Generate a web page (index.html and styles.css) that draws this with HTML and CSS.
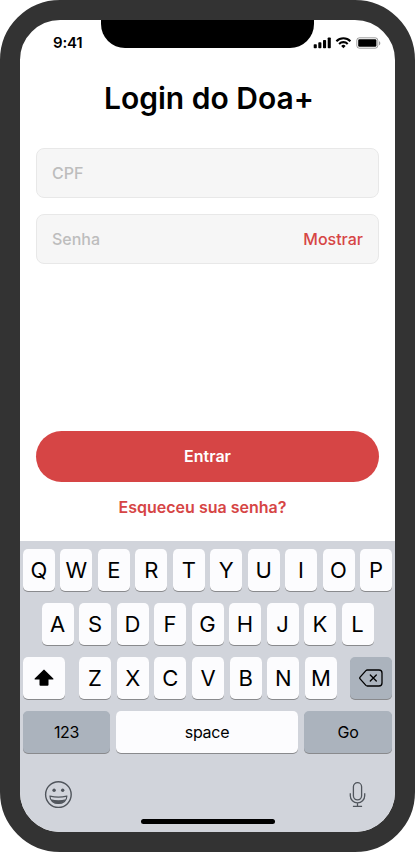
FILE: index.html
```html
<!DOCTYPE html>
<html lang="pt-BR">
<head>
<meta charset="utf-8">
<title>Login do Doa+</title>
<link rel="stylesheet" href="styles.css">
</head>
<body>
<div class="phone">
  <header class="status">
    <span class="time">9:41</span>
    <div class="notch"></div>
    <svg class="indicators" width="68" height="14" viewBox="0 0 68 14">
      <rect x=".7" y="8.200" width="3.100" height="4" rx=".8"/>
      <rect x="5.300" y="6.200" width="3.100" height="6" rx=".8"/>
      <rect x="10" y="3.900" width="3.100" height="8.300" rx=".8"/>
      <rect x="14.700" y="1.500" width="3.100" height="10.700" rx=".8"/>
      <g fill="none" stroke="#000" stroke-width="2.100">
        <path d="M23.4 5.200a9.900 9.900 0 0 1 14 0"/>
        <path d="M26.100 7.900a6.100 6.100 0 0 1 8.600 0"/>
      </g>
      <path d="M28.200 9.900a3.200 3.200 0 0 1 4.400 0L30.400 12.200z"/>
      <rect x="43.800" y="1.800" width="21" height="10.400" rx="2.600" fill="none" stroke="#000" stroke-opacity=".38"/>
      <rect x="45.200" y="3.200" width="18.200" height="7.600" rx="1.300"/>
      <path d="M66 5.200v4c.8-.3 1.300-1.100 1.300-2s-.5-1.700-1.300-2z" fill-opacity=".4"/>
    </svg>
  </header>
  <main class="login">
    <h1>Login do Doa+</h1>
    <div class="field"><span>CPF</span></div>
    <div class="field"><span>Senha</span><a class="reveal">Mostrar</a></div>
    <div class="submit">Entrar</div>
    <a class="forgot">Esqueceu sua senha?</a>
  </main>
  <section class="keyboard">
    <div class="row">
      <b>Q</b><b>W</b><b>E</b><b>R</b><b>T</b><b>Y</b><b>U</b><b>I</b><b>O</b><b>P</b>
    </div>
    <div class="row home">
      <b>A</b><b>S</b><b>D</b><b>F</b><b>G</b><b>H</b><b>J</b><b>K</b><b>L</b>
    </div>
    <div class="row">
      <b class="wide"><svg width="20" height="18" viewBox="0 0 20 18"><path d="M9.400.9q.6-.6 1.200 0l8.700 8.700q.7.900-.4.900H14.500v5.200q0 1-1 1h-7q-1 0-1-1v-5.200H1.100q-1.100 0-.4-.9z"/></svg></b>
      <div class="row letters"><b>Z</b><b>X</b><b>C</b><b>V</b><b>B</b><b>N</b><b>M</b></div>
      <b class="wide gray"><svg width="24" height="18" viewBox="0 0 24 18" fill="none" stroke="#000" stroke-width="1.300" stroke-linecap="round" stroke-linejoin="round"><path d="M8.300 1H20a3 3 0 0 1 3 3v10a3 3 0 0 1-3 3H8.300q-.8 0-1.400-.6L1.100 9.900q-.8-.9 0-1.800L6.900 1.600Q7.500 1 8.300 1zM11.300 6l6 6M17.300 6l-6 6"/></svg></b>
    </div>
    <div class="row words">
      <b class="gray">123</b><b class="space">space</b><b class="gray go">Go</b>
    </div>
    <div class="tools">
      <svg width="28" height="28" viewBox="0 0 28 28" fill="none" stroke="#50555c" stroke-width="1.400">
        <circle cx="14.400" cy="13.600" r="12.800"/>
        <circle cx="10.100" cy="9.300" r="1.700" fill="#50555c" stroke="none"/>
        <circle cx="18.700" cy="9.300" r="1.700" fill="#50555c" stroke="none"/>
        <path d="M6 15.200q8.400 1.800 16.800 0c.2 4.200-3.600 7.300-8.400 7.300s-8.600-3.100-8.400-7.300z" stroke-width="1.200"/>
        <path d="M6.900 18.300q7.500 2 15 0c-1.300 2.700-4.200 4.200-7.500 4.200s-6.200-1.500-7.500-4.200z" fill="#50555c" stroke="none"/>
      </svg>
      <svg width="17" height="26" viewBox="0 0 17 26" fill="none" stroke="#50555c" stroke-width="1.300">
        <rect x="4.400" y=".7" width="8.200" height="17.200" rx="4.100"/>
        <path d="M1.300 11.200v2.500a7.200 7.200 0 0 0 14.400 0v-2.500M8.500 20.900v3.500M3.900 24.400h9.200"/>
      </svg>
    </div>
    <div class="indicator"></div>
  </section>
</div>
</body>
</html>
```
FILE: styles.css
```css
* { box-sizing: border-box; }
body { margin: 0; background: #fff; font-family: Inter, "Liberation Sans", sans-serif; color: #000; }
.phone {
  width: 415px;
  height: 852px;
  border: 20px solid #333;
  border-radius: 60px;
  background: #fff;
  overflow: hidden;
  display: flex;
  flex-direction: column;
}
.status { position: relative; height: 44px; flex: none; display: flex; justify-content: space-between; padding: 0 14px 0 33px; }
.time { font-size: 15px; line-height: 18px; font-weight: 600; letter-spacing: -.2px; margin-top: 14px; }
.notch { position: absolute; left: 81px; top: 0; width: 213px; height: 28px; background: #000; border-radius: 0 0 24px 24px; }
.indicators { margin-top: 16px; }
.login { flex: 1; display: flex; flex-direction: column; padding: 16px 16px 0; }
h1 { margin: 0 0 32px; padding-left: 3px; font-size: 30px; line-height: 36px; font-weight: 600; text-align: center; }
.field {
  height: 50px;
  margin-bottom: 16px;
  padding: 0 15px;
  border: 1px solid #e8e8e8;
  border-radius: 8px;
  background: #f6f6f6;
  display: flex;
  align-items: center;
  justify-content: space-between;
  font-size: 16px;
  font-weight: 500;
  color: #bdbdbd;
}
.reveal { color: #d64545; }
.submit {
  height: 51px;
  margin-top: 151px;
  border-radius: 26px;
  background: #d64545;
  color: #fff;
  font-size: 16px;
  font-weight: 600;
  line-height: 51px;
  text-align: center;
}
.forgot { margin-top: 16px; padding-right: 10px; font-size: 16px; line-height: 19px; font-weight: 600; text-align: center; color: #d64545; }
.keyboard { height: 291px; flex: none; background: #d1d4db; padding: 8px 3px 0; display: flex; flex-direction: column; gap: 12px; }
.row { display: flex; justify-content: space-between; }
.home { padding: 0 18.500px; }
.letters { width: 258px; margin-left: 1px; }
.row b {
  width: 32px;
  height: 42px;
  border-radius: 5px;
  background: #fcfcfe;
  box-shadow: 0 1px 0 #898a8d;
  font-size: 22px;
  font-weight: 400;
  display: flex;
  align-items: center;
  justify-content: center;
}
.row .wide { width: 42px; }
.row .gray { background: #abb3bd; }
.words b { width: 87px; font-size: 16px; letter-spacing: -.3px; }
.words .space { width: 182px; }
.words .go { width: 88px; }
.tools { display: flex; justify-content: space-between; align-items: center; height: 28px; margin-top: 16px; padding: 0 26px 0 21px; }
.indicator { width: 134px; height: 5px; border-radius: 3px; background: #000; margin: -2px auto 0; }
```
